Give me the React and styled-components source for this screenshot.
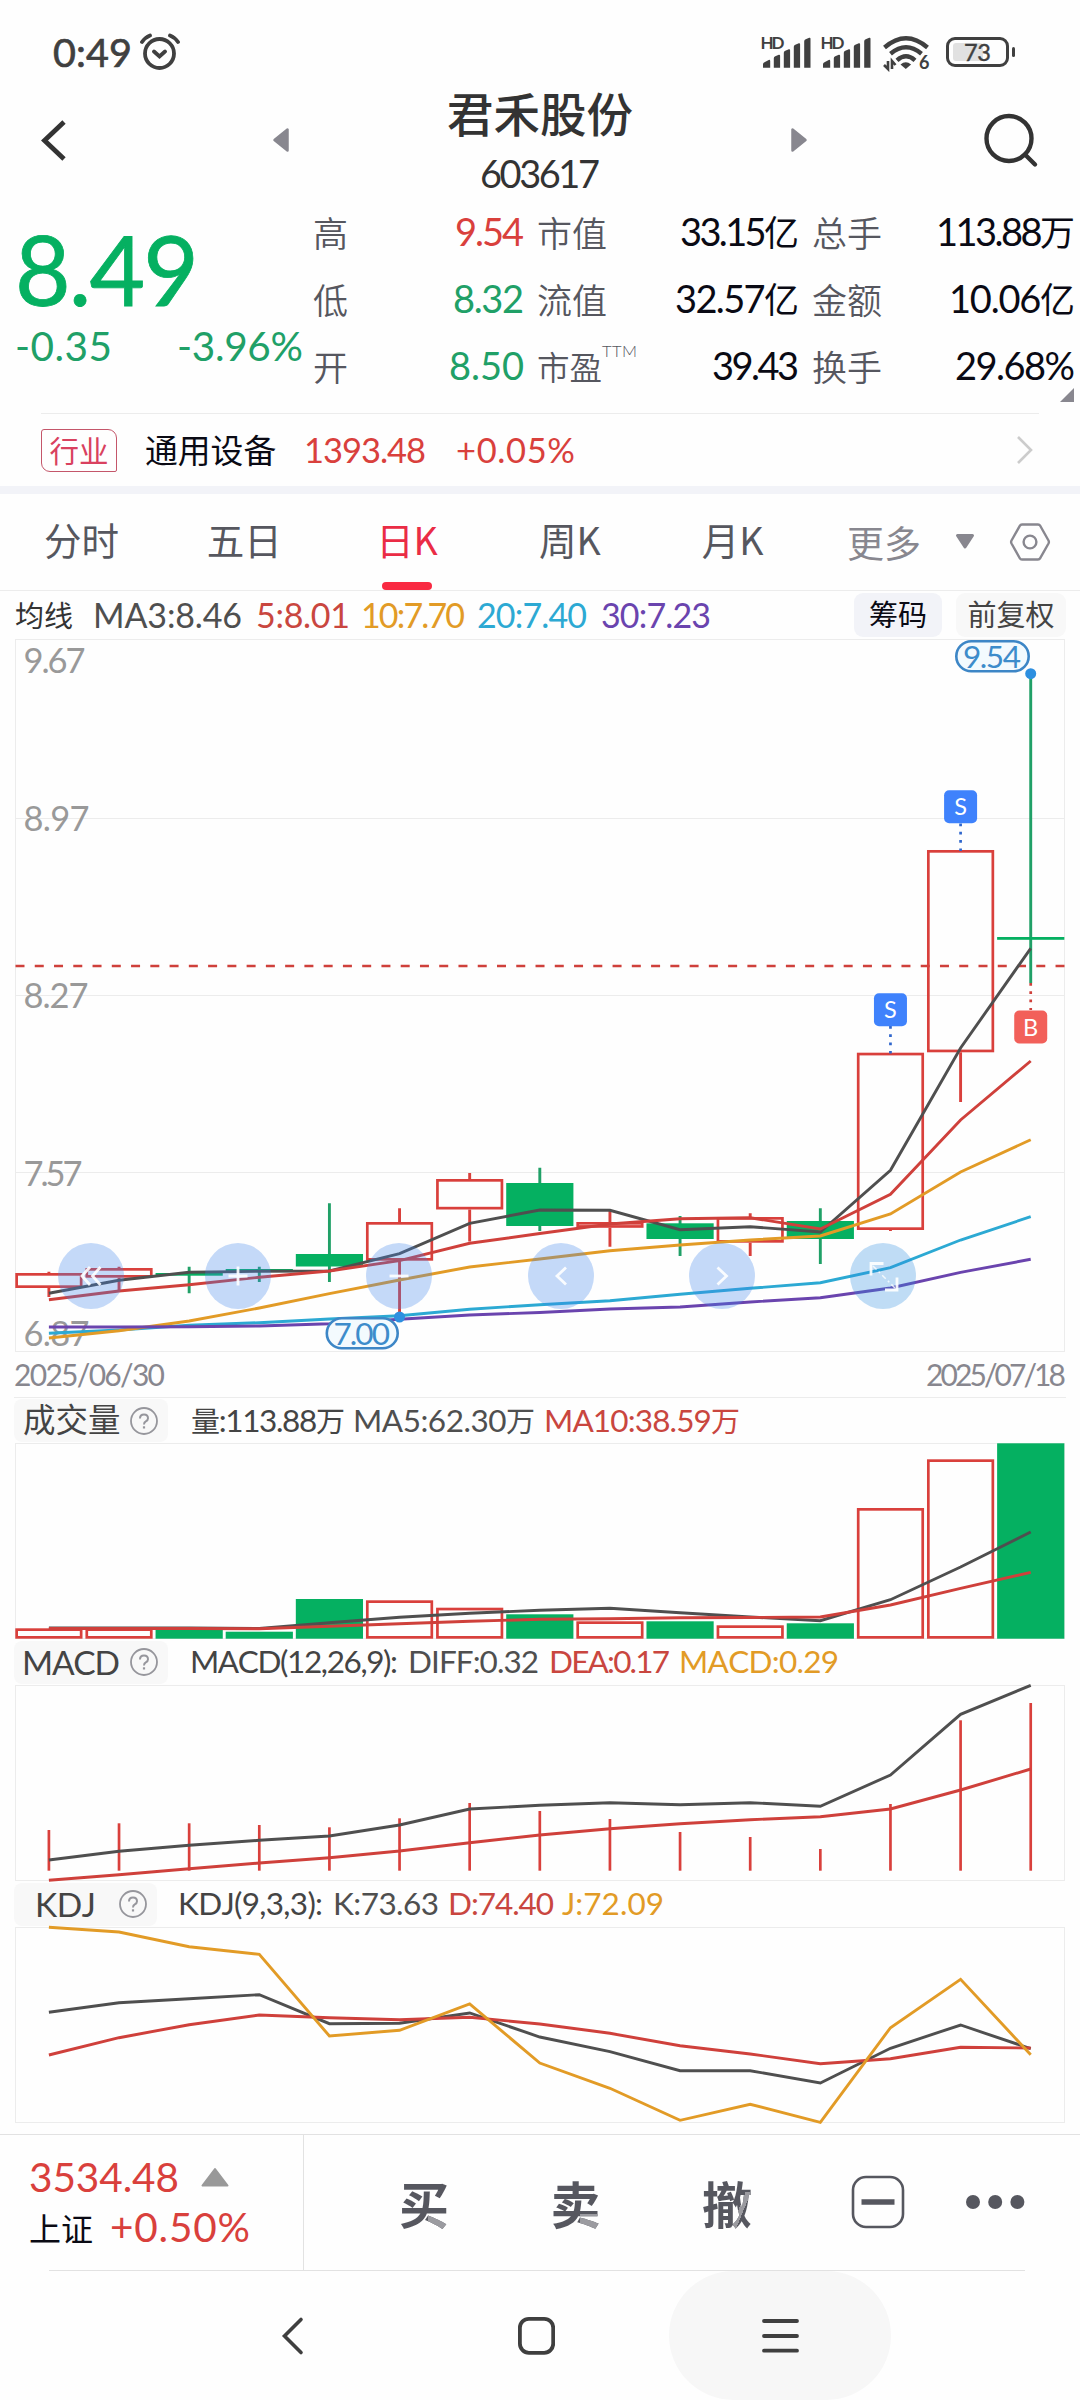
import { useLayoutEffect, useRef } from "react";
import styled, { createGlobalStyle } from "styled-components";

const RED = "#d9403c";
const GREEN = "#05b061";
const GREEN_LINE = "#20a067";
const DARK = "#4f4f4f";
const ORANGE = "#e29b26";
const CYAN = "#2ca9d3";
const PURPLE = "#6a44ae";
const BORDER = "#ececec";

const GlobalStyle = createGlobalStyle`
  * {
    box-sizing: border-box;
  }
  body {
    margin: 0;
    background: #fefefe;
    font-family: Lato, "Noto Sans CJK SC", sans-serif;
    color: #333;
  }
  svg {
    display: block;
  }
  svg text {
    font-kerning: none;
  }
`;

const Screen = styled.div`
  width: 1080px;
  height: 2400px;
  overflow: hidden;
  display: flex;
  flex-direction: column;
`;

/* ---------- text ---------- */

const FitBox = styled.span`
  display: block;
  flex: none;
  width: ${(p) => p.$w}px;
  margin-left: ${(p) => p.$ml || 0}px;
  font-size: ${(p) => p.$size}px;
  line-height: 1.2;
  color: ${(p) => p.$color || "inherit"};
  white-space: nowrap;
  font-kerning: none;
  -webkit-text-stroke: ${(p) => p.$stroke || 0}px currentColor;
`;

const Han = styled.span`
  font-size: 0.92em;
`;

// Tightens the letter spacing so that a figure fills its slot.
const Fit = ({ w, size, color, stroke, ml, children }) => {
  const ref = useRef(null);
  useLayoutEffect(() => {
    const el = ref.current;
    el.style.letterSpacing = "0px";
    const natural = el.getBoundingClientRect().width;
    el.style.letterSpacing = `${(w - natural) / (children.length - 1)}px`;
  }, [w, children]);
  return (
    <FitBox $w={w} $size={size} $color={color} $stroke={stroke} $ml={ml}>
      <span ref={ref}>
        {children
          .split(/([\u4e00-\u9fff]+)/)
          .map((part, i) => (i % 2 ? <Han key={i}>{part}</Han> : part))}
      </span>
    </FitBox>
  );
};

/* ---------- status bar ---------- */

const StatusBar = styled.div`
  height: 84px;
  padding: 20px 71px 0 53px;
  display: flex;
  align-items: center;
  flex: none;
  color: #404040;
`;

const AlarmIcon = styled.svg`
  width: 42px;
  height: 40px;
  margin-left: 6px;
`;

const StatusIcons = styled.div`
  margin-left: auto;
  display: flex;
  align-items: center;
`;

const Signal = styled.svg`
  width: 60px;
  height: 40px;
`;

const Battery = styled.div`
  position: relative;
  width: 63px;
  height: 30px;
  margin-left: 15px;
  border: 3px solid #404040;
  border-radius: 9px;
  padding: 3px 4px;
  &::after {
    content: "";
    position: absolute;
    right: -9px;
    top: 7px;
    width: 3px;
    height: 10px;
    border-radius: 2px;
    background: #404040;
  }
`;

const Charge = styled.div`
  width: 30px;
  height: 18px;
  border-radius: 3px;
  background: #e1e1e1;
  display: flex;
  align-items: center;
  padding-left: 11px;
`;

const SignalIcon = () => (
  <Signal viewBox="762 32 60 40">
    <text
      x="761.5"
      y="48.8"
      fontSize="17"
      fontWeight="700"
      textLength="24"
      fill="#404040"
    >
      HD
    </text>
    <g fill="#404040">
      <path d="M764 67.7v-3.5q0-1.5 1.5-2l4.2-2.2q1.5-.5 1.5 1v6.7z" />
      <path d="M774.8 67.7v-9.500q0-1.500 1.500-2l3.500-1.500q1.300-.3 1.300 1v12z" />
      <path d="M784.8 67.7v-15q0-1.500 1.500-2l3.500-1.500q1.300-.3 1.300 1v17.500z" />
      <path d="M794.8 67.7v-21q0-1.500 1.500-2l3.500-1.500q1.300-.3 1.300 1v23.500z" />
      <path d="M805.2 67.7v-26.500q0-1.500 1.500-2l3.500-1.500q1.300-.3 1.300 1v29z" />
    </g>
  </Signal>
);

const Status = () => (
  <StatusBar>
    <Fit w={79} size={39.5} stroke={0.7}>
      0:49
    </Fit>
    <AlarmIcon viewBox="138 32 42 40" fill="none" stroke="#404040">
      <circle cx="159.5" cy="53.5" r="14.5" strokeWidth="3.8" />
      <path
        d="M154 51.500l5.500 5 5.500-5M142 42q3-4.500 8-6.500M178 42q-3-4.500-8-6.500"
        strokeWidth="3.8"
        strokeLinecap="round"
      />
    </AlarmIcon>
    <StatusIcons>
      <SignalIcon />
      <SignalIcon />
      <svg
        width="50"
        height="40"
        viewBox="883 32 50 40"
        fill="none"
        stroke="#404040"
        strokeWidth="4.4"
      >
        <path d="M886.5 47.500q21.500-18.500 43 0" />
        <path d="M892.5 53.800q15.500-13 31 0" />
        <path d="M899 60.300q9-8 18 0" />
        <path
          d="M902.5 64.500q5.300-4.500 10.600 0l-5.300 4.500z"
          fill="#404040"
          stroke="none"
        />
        <path d="M890 61v8l-4-4M894 69v-8l3.500 4" strokeWidth="2.6" />
        <text
          x="921"
          y="69.3"
          fontSize="18"
          fontWeight="700"
          fill="#404040"
          stroke="none"
        >
          6
        </text>
      </svg>
      <Battery>
        <Charge>
          <Fit w={27} size={23.5} stroke={0.4}>
            73
          </Fit>
        </Charge>
      </Battery>
    </StatusIcons>
  </StatusBar>
);

/* ---------- header ---------- */

const HeaderBar = styled.header`
  height: 112px;
  flex: none;
  display: grid;
  grid-template-columns: 268px 544px 268px;
  align-items: center;
`;

const HeaderMiddle = styled.div`
  display: flex;
  justify-content: space-between;
  align-items: center;
  padding: 0 3px;
  height: 112px;
`;

const Title = styled.div`
  display: flex;
  flex-direction: column;
  align-items: center;
  gap: 10px;
  h1 {
    margin: 0;
    font-family: "Noto Sans CJK SC", sans-serif;
    font-size: 46.5px;
    font-weight: 500;
    line-height: 58px;
    color: #333;
  }
`;

const BackSlot = styled.div`
  padding-left: 38px;
`;

const SearchSlot = styled.div`
  padding: 0 40px 0 0;
  display: flex;
  justify-content: flex-end;
`;

const Header = () => (
  <HeaderBar>
    <BackSlot>
      <svg width="32" height="48" viewBox="38 116 32 48" fill="none">
        <path
          d="M64 122L44.500 140.500L64 159"
          stroke="#333"
          strokeWidth="4.8"
        />
      </svg>
    </BackSlot>
    <HeaderMiddle>
      <svg width="18" height="26" viewBox="0 0 18 26">
        <path
          d="M16.500 2.500v21L3.500 13z"
          fill="#88878f"
          stroke="#88878f"
          strokeWidth="2.5"
          strokeLinejoin="round"
        />
      </svg>
      <Title>
        <h1>君禾股份</h1>
        <Fit w={120} size={38}>
          603617
        </Fit>
      </Title>
      <svg width="18" height="26" viewBox="0 0 18 26">
        <path
          d="M1.500 2.500v21L14.500 13z"
          fill="#88878f"
          stroke="#88878f"
          strokeWidth="2.5"
          strokeLinejoin="round"
        />
      </svg>
    </HeaderMiddle>
    <SearchSlot>
      <svg
        width="60"
        height="60"
        viewBox="980 110 60 60"
        fill="none"
        stroke="#333"
        strokeWidth="4.4"
      >
        <circle cx="1009" cy="138.5" r="22.5" />
        <path d="M1025 154.500l10 10" strokeLinecap="round" />
      </svg>
    </SearchSlot>
  </HeaderBar>
);

/* ---------- quote ---------- */

const QuotePanel = styled.section`
  position: relative;
  height: 217px;
  flex: none;
  display: flex;
`;

const PriceBlock = styled.div`
  width: 313px;
  padding: 15px 0 0 15px;
`;

const Changes = styled.div`
  display: flex;
  margin-top: -4px;
`;

const StatGrid = styled.div`
  display: grid;
  grid-template-columns: 211px 262px 263px;
  grid-template-rows: repeat(3, 67.2px);
  column-gap: 13px;
  padding-top: 2px;
`;

const Stat = styled.div`
  display: flex;
  justify-content: space-between;
  align-items: center;
  color: #0a0a14;
`;

const StatLabel = styled.span`
  font-family: "Noto Sans CJK SC", sans-serif;
  font-size: ${(p) => (p.$small ? 32.5 : 35)}px;
  font-weight: 350;
  line-height: 44px;
  color: #56575f;
  display: flex;
  sup {
    font-family: Lato, sans-serif;
    font-size: 16.5px;
    line-height: 14px;
    letter-spacing: 0.4px;
  }
`;

const Corner = styled.svg`
  position: absolute;
  right: 6px;
  bottom: 11px;
`;

const stats = [
  { label: "高", value: "9.54", w: 69, color: RED },
  { label: "市值", value: "33.15亿", w: 119 },
  { label: "总手", value: "113.88万", w: 139 },
  { label: "低", value: "8.32", w: 71, color: GREEN_LINE },
  { label: "流值", value: "32.57亿", w: 124 },
  { label: "金额", value: "10.06亿", w: 126 },
  { label: "开", value: "8.50", w: 75, color: GREEN_LINE },
  { label: "市盈", value: "39.43", w: 87, sup: "TTM" },
  { label: "换手", value: "29.68%", w: 120 },
];

const Quote = () => (
  <QuotePanel>
    <PriceBlock>
      <Fit w={184} size={96} color={GREEN} stroke={0.8}>
        8.49
      </Fit>
      <Changes>
        <Fit w={97} size={40.5} color={GREEN_LINE}>
          -0.35
        </Fit>
        <Fit w={126} size={40.5} color={GREEN_LINE} ml={65}>
          -3.96%
        </Fit>
      </Changes>
    </PriceBlock>
    <StatGrid>
      {stats.map((s) => (
        <Stat key={s.label}>
          <StatLabel $small={s.sup}>
            {s.label}
            {s.sup && <sup>{s.sup}</sup>}
          </StatLabel>
          <Fit w={s.w} size={38} color={s.color}>
            {s.value}
          </Fit>
        </Stat>
      ))}
    </StatGrid>
    <Corner width="14" height="14" viewBox="0 0 14 14">
      <path d="M14 0v14H0z" fill="#88878f" />
    </Corner>
  </QuotePanel>
);

/* ---------- industry ---------- */

const IndustryRow = styled.div`
  height: 73px;
  margin: 0 41px;
  flex: none;
  display: flex;
  align-items: center;
  border-top: 1px solid ${BORDER};
`;

const Tag = styled.span`
  width: 76px;
  height: 43px;
  border: 1px solid #c4566a;
  border-radius: 3px 9px 2px 9px;
  font-family: "Noto Sans CJK SC", sans-serif;
  font-size: 29.5px;
  line-height: 38px;
  text-align: center;
  color: #d9415f;
`;

const IndustryName = styled.span`
  font-family: "Noto Sans CJK SC", sans-serif;
  font-size: 32.8px;
  line-height: 40px;
  margin: -3px 0 0 28px;
  width: 159px;
  color: #0a0a14;
`;

const RowArrow = styled.svg`
  margin-left: auto;
  margin-right: 5px;
`;

const Band = styled.div`
  height: 8px;
  flex: none;
  background: #f2f3f8;
`;

const Industry = () => (
  <IndustryRow>
    <Tag>行业</Tag>
    <IndustryName>通用设备</IndustryName>
    <Fit w={122} size={34.5} color={RED}>
      1393.48
    </Fit>
    <Fit w={119} size={34.5} color={RED} ml={30}>
      +0.05%
    </Fit>
    <RowArrow width="18" height="30" viewBox="0 0 18 30" fill="none">
      <path d="M2 2l13 13L2 28" stroke="#ccc" strokeWidth="2.6" />
    </RowArrow>
  </IndustryRow>
);

/* ---------- tabs ---------- */

const TabBar = styled.nav`
  height: 97px;
  flex: none;
  display: flex;
  align-items: center;
  border-bottom: 1px solid ${BORDER};
`;

const Tab = styled.div`
  position: relative;
  width: 162.8px;
  height: 96px;
  font-family: "Noto Sans CJK SC", sans-serif;
  font-size: 37.5px;
  line-height: 90px;
  text-align: center;
  color: ${(p) => (p.$active ? "#ea2c45" : "#56575f")};
  &::after {
    content: "";
    display: ${(p) => (p.$active ? "block" : "none")};
    position: absolute;
    left: 56px;
    bottom: 0;
    width: 50px;
    height: 8px;
    border-radius: 4px;
    background: #f92a42;
  }
`;

const More = styled.div`
  display: flex;
  align-items: center;
  gap: 34px;
  margin-left: 33px;
  height: 96px;
  font-family: "Noto Sans CJK SC", sans-serif;
  font-size: 37px;
  line-height: 88px;
  color: #88878f;
`;

const Tabs = () => (
  <TabBar>
    {["分时", "五日", "日K", "周K", "月K"].map((t) => (
      <Tab key={t} $active={t === "日K"}>
        {t}
      </Tab>
    ))}
    <More>
      更多
      <svg width="20" height="19" viewBox="0 0 20 19">
        <path
          d="M2.500 2.500h15L10 14z"
          fill="#88878f"
          stroke="#88878f"
          strokeWidth="3"
          strokeLinejoin="round"
        />
      </svg>
      <svg
        width="42"
        height="38"
        viewBox="0 0 42 38"
        fill="none"
        stroke="#88878f"
        strokeWidth="2.4"
      >
        <path
          d="M13 1.500h16q1.500 0 2.200 1.300l8.300 14.700q.8 1.500 0 3l-8.300 14.700q-.7 1.300-2.200 1.300H13q-1.500 0-2.200-1.300L2.500 20.500q-.8-1.500 0-3L10.800 2.800Q11.500 1.500 13 1.500z"
          strokeLinejoin="round"
        />
        <circle cx="21" cy="19" r="6.4" />
      </svg>
    </More>
  </TabBar>
);

/* ---------- legends ---------- */

const AverageRow = styled.div`
  height: 48px;
  flex: none;
  display: flex;
  align-items: center;
  padding: 0 14px 0 15px;
`;

const RowLabel = styled.span`
  width: 78px;
  margin-top: -3px;
  font-family: "Noto Sans CJK SC", sans-serif;
  font-size: 29px;
  line-height: 40px;
`;

const Chip = styled.span`
  width: ${(p) => p.$w}px;
  height: 44px;
  margin-left: ${(p) => (p.$push ? "auto" : "14px")};
  border-radius: 9px;
  background: ${(p) => p.$bg};
  font-family: "Noto Sans CJK SC", sans-serif;
  font-size: 29px;
  line-height: 40px;
  text-align: center;
  color: ${(p) => p.$color};
`;

const Averages = () => (
  <AverageRow>
    <RowLabel>均线</RowLabel>
    <Fit w={149} size={34} color={DARK}>
      MA3:8.46
    </Fit>
    <Fit w={94} size={34} color="#c9463f" ml={14}>
      5:8.01
    </Fit>
    <Fit w={104} size={34} color={ORANGE} ml={11}>
      10:7.70
    </Fit>
    <Fit w={110} size={34} color={CYAN} ml={12}>
      20:7.40
    </Fit>
    <Fit w={110} size={34} color={PURPLE} ml={14}>
      30:7.23
    </Fit>
    <Chip $w={88} $bg="#f2f3f8" $color="#0a0a14" $push>
      筹码
    </Chip>
    <Chip $w={110} $bg="#f8f8f8" $color="#444">
      前复权
    </Chip>
  </AverageRow>
);

const LegendRow = styled.div`
  height: ${(p) => p.$h}px;
  flex: none;
  display: flex;
  align-items: center;
  margin: 0 14px;
  border-top: ${(p) => (p.$line ? `1px solid ${BORDER}` : "none")};
`;

const Indicator = styled.div`
  width: ${(p) => p.$w}px;
  height: 43px;
  padding: 0 10px 0 ${(p) => p.$pl}px;
  margin-right: 23px;
  border-radius: 8px;
  background: #f8f8f8;
  display: flex;
  align-items: center;
  justify-content: space-between;
  color: #444;
`;

const IndicatorName = styled.span`
  font-family: "Noto Sans CJK SC", sans-serif;
  font-size: 32.5px;
  line-height: 38px;
  margin-top: -5px;
`;

const HelpIcon = () => (
  <svg width="28" height="28" viewBox="0 0 28 28" fill="none" stroke="#96969c">
    <circle cx="14" cy="14" r="13" strokeWidth="1.8" />
    <path
      d="M10 11.500q0-4 4-4t4 3.700q0 2-2.200 3.200-1.800 1-1.800 3"
      strokeWidth="2"
    />
    <path d="M14 19.300v2.200" strokeWidth="2.2" />
  </svg>
);

/* ---------- charts ---------- */

const px = (i) => 48.9 + i * 70.13;
const HALF = 33.6;

const candles = [
  { up: true, top: 1273, bottom: 1288, high: 1271.7, low: 1297 },
  { up: true, top: 1268, bottom: 1277.7, high: 1266.7, low: 1290 },
  { up: false, top: 1273, bottom: 1275.7, high: 1266.7, low: 1293.3 },
  { up: false, top: 1269, bottom: 1271.7, high: 1266.7, low: 1282 },
  { up: false, top: 1254, bottom: 1266.5, high: 1203.3, low: 1282 },
  { up: true, top: 1222, bottom: 1260.7, high: 1208.3, low: 1316 },
  { up: true, top: 1179, bottom: 1209.5, high: 1173, low: 1241.5 },
  { up: false, top: 1183, bottom: 1226, high: 1167.7, low: 1231 },
  { up: true, top: 1222, bottom: 1227.8, high: 1210, low: 1246.7 },
  { up: false, top: 1223.3, bottom: 1239, high: 1216, low: 1256 },
  { up: true, top: 1217, bottom: 1242.7, high: 1213.3, low: 1256 },
  { up: false, top: 1221, bottom: 1239, high: 1208.3, low: 1264 },
  { up: true, top: 1052.7, bottom: 1230, high: 1052.7, low: 1231 },
  { up: true, top: 850, bottom: 1052.3, high: 850, low: 1102 },
  { up: false, top: 937, bottom: 939.8, high: 673.7, low: 983 },
];

const averages = [
  {
    color: CYAN,
    ys: [1333.3, 1330, 1325.3, 1322.7, 1319, 1315.7, 1309.3, 1304.7, 1300.7, 1294.3, 1288.3, 1282.7, 1267.7, 1240, 1216.7],
  },
  {
    color: ORANGE,
    ys: [1338, 1330.7, 1321, 1308, 1293.7, 1280, 1267, 1259, 1250.7, 1245, 1240, 1236, 1214, 1172, 1139.7],
  },
  {
    color: PURPLE,
    ys: [1327, 1327, 1326.7, 1326, 1323.7, 1319.3, 1315, 1312.5, 1309, 1307, 1302, 1297.7, 1288, 1272.3, 1259.3],
  },
  {
    color: DARK,
    ys: [1293.3, 1280.3, 1272.3, 1271.3, 1271, 1253.7, 1223.3, 1210, 1210.3, 1229.7, 1226.7, 1232, 1170.3, 1048, 948.3],
  },
  {
    color: "#cf403b",
    ys: [1299.7, 1291, 1284.7, 1277.3, 1271, 1260.7, 1243.3, 1233.5, 1224, 1218.7, 1217.7, 1229, 1194.3, 1120, 1061],
  },
];

const volumeTops = [1628.3, 1628.3, 1630, 1631.7, 1599, 1600.3, 1607.7, 1614.3, 1621.3, 1621.3, 1625.3, 1623.3, 1508, 1459.3, 1443.3];
const volumeLines = [
  {
    color: DARK,
    ys: [1628, 1628, 1628, 1628.5, 1622.7, 1617.3, 1613.3, 1610.3, 1608.3, 1612.7, 1617, 1620.7, 1599.7, 1567, 1532],
  },
  {
    color: "#cf403b",
    ys: [1628.5, 1628.5, 1628.5, 1628.7, 1626.3, 1623.7, 1621.3, 1619.3, 1618.7, 1617.7, 1617.5, 1617, 1605, 1588.3, 1572.3],
  },
];

const macdTops = [1830, 1823.3, 1823.3, 1825, 1827.3, 1818.3, 1803, 1811, 1819, 1832, 1837, 1849, 1804, 1720.3, 1703];
const macdLines = [
  {
    color: DARK,
    ys: [1860, 1851.3, 1845.3, 1840.3, 1836, 1825, 1809, 1805.3, 1802.7, 1804.7, 1802.7, 1806.3, 1775, 1714.3, 1685.3],
  },
  {
    color: "#cf403b",
    ys: [1880.3, 1874.7, 1868.7, 1863, 1857.7, 1851, 1842.7, 1835, 1828.7, 1823.7, 1819.7, 1816.7, 1809, 1790, 1769],
  },
];

const kdjLines = [
  {
    color: DARK,
    ys: [2012.3, 2002.7, 1998.7, 1994.7, 2023.7, 2023.3, 2013, 2037, 2051.7, 2070.7, 2070.7, 2083, 2048.3, 2025, 2048.7],
  },
  {
    color: "#cf403b",
    ys: [2055, 2037.7, 2024.7, 2015, 2017.7, 2019.7, 2017.3, 2024, 2033.3, 2045.7, 2054, 2063.7, 2058.7, 2047.3, 2048],
  },
  {
    color: ORANGE,
    ys: [1927.3, 1932, 1946.7, 1954.3, 2036, 2030.3, 2004, 2063, 2088.3, 2120.3, 2104.3, 2122.3, 2027.7, 1979.3, 2054.7],
  },
];

const Plot = styled.svg`
  width: 1080px;
  height: ${(p) => p.$h}px;
  flex: none;
  overflow: visible;
`;

const Frame = ({ top, bottom, lines = [] }) => (
  <g fill="none" stroke={BORDER} strokeWidth="1">
    <rect x="15.5" y={top} width="1049" height={bottom - top} />
    {lines.map((y) => (
      <path key={y} d={`M16 ${y}H1064`} />
    ))}
  </g>
);

const Lines = ({ series }) =>
  series.map((s, k) => (
    <polyline
      key={k}
      points={s.ys.map((y, i) => `${px(i)},${y}`).join(" ")}
      fill="none"
      stroke={s.color}
      strokeWidth="2.9"
    />
  ));

const Bar = ({ i, up, top, bottom }) =>
  up ? (
    <rect
      x={px(i) - HALF + 1.35}
      y={top + 1.35}
      width={HALF * 2 - 2.7}
      height={bottom - top - 2.7}
      fill="none"
      stroke={RED}
      strokeWidth="2.7"
    />
  ) : (
    <rect
      x={px(i) - HALF}
      y={top}
      width={HALF * 2}
      height={bottom - top}
      fill={GREEN}
    />
  );

const Candle = ({ i, c }) => (
  <g>
    <path
      d={`M${px(i)} ${c.high}V${c.up ? c.top : c.low}M${px(i)} ${c.bottom}V${c.low}`}
      stroke={c.up ? RED : GREEN_LINE}
      strokeWidth="2.9"
    />
    <Bar i={i} up={c.up} top={c.top} bottom={c.bottom} />
  </g>
);

const Trade = ({ i, y, from, to, sell }) => (
  <g>
    <path
      d={`M${px(i)} ${from}V${to}`}
      stroke={sell ? "#2f66cc" : "#cf403b"}
      strokeWidth="2.7"
      strokeDasharray="2.7 5.6"
    />
    <rect
      x={px(i) - 16.5}
      y={y}
      width="33"
      height="33"
      rx="5"
      fill={sell ? "#3f82fc" : "#f2605a"}
    />
    <text x={px(i)} y={y + 25} fontSize="23.5" textAnchor="middle" fill="#fff">
      {sell ? "S" : "B"}
    </text>
  </g>
);

const PricePill = ({ x, y, w, dotX, dotY, children }) => (
  <g>
    <rect
      x={x + 1.3}
      y={y + 1.3}
      width={w - 2.6}
      height="30"
      rx="15"
      fill="#f3fafe"
      stroke="#3d86c6"
      strokeWidth="2.6"
    />
    <text
      x={x + 8}
      y={y + 27.5}
      fontSize="31.5"
      textLength={w - 17}
      fill="#3d8ccb"
    >
      {children}
    </text>
    <circle cx={dotX} cy={dotY} r="5.5" fill="#2d8fe0" />
  </g>
);

const ChartArea = styled.div`
  position: relative;
  height: 713px;
  flex: none;
`;

const RoundButton = styled.button`
  position: absolute;
  left: ${(p) => p.$x - 33}px;
  top: 604px;
  width: 66px;
  height: 66px;
  padding: 0;
  border: 0;
  border-radius: 50%;
  background: ${(p) => p.$bg || "rgba(62, 131, 235, 0.3)"};
`;

const controls = [
  { x: 91, d: "M32 24l-8 9 8 9M42.500 24l-8 9 8 9" },
  { x: 238, d: "M23.500 33h19M33 23.500v19" },
  { x: 399, d: "M23.500 33h19" },
  { x: 561, d: "M38 24.500l-9 8.500 9 8.500" },
  { x: 722, d: "M28.500 24.500l9 8.500-9 8.500" },
  {
    x: 883,
    d: "M21 32.500V20.500h12.500M35 47H47V34.500",
    dashed: "M23 23L45 45",
    bg: "rgba(45, 143, 224, 0.3)",
  },
];

const axis = [
  { label: "9.67", y: 672.7, w: 62 },
  { label: "8.97", y: 831.3, w: 66 },
  { label: "8.27", y: 1008.3, w: 65 },
  { label: "7.57", y: 1185.5, w: 59 },
  { label: "6.87", y: 1345.7, w: 66 },
];

const MainChart = () => (
  <ChartArea>
    <Plot $h={713} viewBox="0 639 1080 713">
      <Frame top={639.5} bottom={1351.5} lines={[818.5, 995.5, 1172.5]} />
      {axis.map((a) => (
        <text
          key={a.label}
          x="23.5"
          y={a.y}
          fontSize="34.5"
          textLength={a.w}
          fill="#999"
        >
          {a.label}
        </text>
      ))}
      <path
        d="M15.5 966H1064.5"
        stroke="#cf403b"
        strokeWidth="2.7"
        strokeDasharray="9 10.26"
      />
      {candles.map((c, i) => (
        <Candle key={i} i={i} c={c} />
      ))}
      <Lines series={averages} />
      <Trade i={12} y={993.3} from={1026} to={1054} sell />
      <Trade i={13} y={790.3} from={823.5} to={851} sell />
      <Trade i={14} y={1010.5} from={983} to={1010} />
      <PricePill x={955} y={640} w={75} dotX={1030.7} dotY={673.7}>
        9.54
      </PricePill>
      <PricePill x={325.5} y={1317} w={73.5} dotX={399.5} dotY={1317}>
        7.00
      </PricePill>
    </Plot>
    {controls.map((c) => (
      <RoundButton key={c.x} $x={c.x} $bg={c.bg}>
        <svg width="66" height="66" viewBox="0 0 66 66" fill="none">
          <path d={c.d} stroke="#fff" strokeOpacity=".9" strokeWidth="2.8" />
          {c.dashed && (
            <path
              d={c.dashed}
              stroke="#fff"
              strokeOpacity=".8"
              strokeWidth="1.5"
              strokeDasharray="5 3 2 3"
            />
          )}
        </svg>
      </RoundButton>
    ))}
  </ChartArea>
);

const Dates = styled.div`
  height: 45px;
  flex: none;
  display: flex;
  justify-content: space-between;
  align-items: center;
  padding: 0 14px 2px 14px;
  color: #88878f;
`;

/* ---------- bottom ---------- */

const Toolbar = styled.div`
  height: 137px;
  margin-top: 11px;
  flex: none;
  display: flex;
  border-top: 1px solid #e2e2e2;
`;

const IndexBox = styled.div`
  width: 304px;
  height: 136px;
  border-right: 1px solid #e2e2e2;
  padding: 17px 0 0 29px;
`;

const IndexLine = styled.div`
  display: flex;
  align-items: center;
  gap: 21px;
  height: 50px;
`;

const IndexName = styled.span`
  width: 60px;
  font-family: "Noto Sans CJK SC", sans-serif;
  font-size: 32px;
  line-height: 40px;
  white-space: nowrap;
  color: #0a0a14;
`;

const Actions = styled.div`
  flex: 1;
  display: flex;
  align-items: center;
  padding: 0 0 3px 95px;
`;

const Action = styled.span`
  width: 50px;
  margin-right: 101.5px;
  font-family: "Noto Sans CJK SC", sans-serif;
  font-size: 50px;
  font-weight: 700;
  line-height: 60px;
  color: transparent;
  background: ${(p) => p.$accent}, #56575f;
  background-clip: text;
  -webkit-background-clip: text;
`;

const cornerAccent =
  "linear-gradient(#9b9ba0, #9b9ba0) 29px 42px / 21px 18px no-repeat";
const strokeAccent =
  "linear-gradient(112deg, transparent 66%, #9b9ba0 66%, #9b9ba0 74%, transparent 74%) 0 20px / 50px 40px no-repeat";

const HoldIcon = styled.svg`
  margin-left: -4px;
`;

const DotsIcon = styled.svg`
  margin-left: 59px;
`;

const FooterLine = styled.div`
  height: 1px;
  flex: none;
  margin: -1px 55px 0 49px;
  background: #e2e2e2;
`;

const NavBar = styled.div`
  height: 130px;
  flex: none;
  display: grid;
  grid-template-columns: 222px 222px 222px;
  column-gap: 22px;
  padding-left: 181px;
`;

const NavItem = styled.div`
  height: 129px;
  border-radius: 65px;
  background: ${(p) => (p.$pressed ? "#f7f7f7" : "transparent")};
  display: flex;
  align-items: center;
  justify-content: center;
`;

const Bottom = () => (
  <>
    <Toolbar>
      <IndexBox>
        <IndexLine>
          <Fit w={150} size={40.5} color={RED}>
            3534.48
          </Fit>
          <svg width="30" height="20" viewBox="0 0 30 20">
            <path
              d="M2.500 18.500h25L15 2z"
              fill="#999"
              stroke="#999"
              strokeWidth="2"
              strokeLinejoin="round"
            />
          </svg>
        </IndexLine>
        <IndexLine>
          <IndexName>上证</IndexName>
          <Fit w={140} size={40.5} color={RED}>
            +0.50%
          </Fit>
        </IndexLine>
      </IndexBox>
      <Actions>
        <Action $accent={cornerAccent}>买</Action>
        <Action $accent={cornerAccent}>卖</Action>
        <Action $accent={strokeAccent}>撤</Action>
        <HoldIcon width="56" height="56" viewBox="0 0 56 56" fill="none">
          <rect
            x="3"
            y="3"
            width="50"
            height="50"
            rx="13"
            stroke="#56575f"
            strokeWidth="2.6"
          />
          <path d="M11.500 28h33" stroke="#56575f" strokeWidth="5.6" />
        </HoldIcon>
        <DotsIcon width="60" height="16" viewBox="0 0 60 16" fill="#56575f">
          <circle cx="8" cy="8" r="7" />
          <circle cx="30.2" cy="8" r="7" />
          <circle cx="52.4" cy="8" r="7" />
        </DotsIcon>
      </Actions>
    </Toolbar>
    <FooterLine />
    <NavBar>
      <NavItem>
        <svg width="26" height="40" viewBox="0 0 26 40" fill="none">
          <path
            d="M22 3.500L5.500 20L22 36.500"
            stroke="#3f3f3f"
            strokeWidth="3.6"
            strokeLinecap="round"
          />
        </svg>
      </NavItem>
      <NavItem>
        <svg width="37" height="40" viewBox="1 0 37 40" fill="none">
          <rect
            x="2.9"
            y="2.8"
            width="33.3"
            height="34"
            rx="9"
            stroke="#3f3f3f"
            strokeWidth="3.8"
          />
        </svg>
      </NavItem>
      <NavItem $pressed>
        <svg width="40" height="40" viewBox="0 0 40 40">
          <path
            d="M4 5h33M4 20h33M4 34.700h33"
            stroke="#3f3f3f"
            strokeWidth="3.8"
            strokeLinecap="round"
          />
        </svg>
      </NavItem>
    </NavBar>
  </>
);

const App = () => {
  return (
    <Screen>
      <GlobalStyle />
      <Status />
      <Header />
      <Quote />
      <Industry />
      <Band />
      <Tabs />
      <Averages />
      <MainChart />
      <Dates>
        <Fit w={151} size={30}>
          2025/06/30
        </Fit>
        <Fit w={140} size={30}>
          2025/07/18
        </Fit>
      </Dates>

      <LegendRow $h={46} $line>
        <Indicator $w={154} $pl={9}>
          <IndicatorName>成交量</IndicatorName>
          <HelpIcon />
        </Indicator>
        <Fit w={154} size={31.5} color="#444">
          量:113.88万
        </Fit>
        <Fit w={182} size={31.5} color={DARK} ml={8}>
          MA5:62.30万
        </Fit>
        <Fit w={196} size={31.5} color="#c9463f" ml={9}>
          MA10:38.59万
        </Fit>
      </LegendRow>
      <Plot $h={196} viewBox="0 1443 1080 196">
        <Frame top={1443.5} bottom={1638.5} />
        {volumeTops.map((top, i) => (
          <Bar key={i} i={i} up={candles[i].up} top={top} bottom={1638.7} />
        ))}
        <Lines series={volumeLines} />
      </Plot>

      <LegendRow $h={46}>
        <Indicator $w={154} $pl={8}>
          <Fit w={98} size={33.5}>
            MACD
          </Fit>
          <HelpIcon />
        </Indicator>
        <Fit w={208} size={31.5} color="#444" ml={-1}>
          MACD(12,26,9):
        </Fit>
        <Fit w={131} size={31.5} color={DARK} ml={10}>
          DIFF:0.32
        </Fit>
        <Fit w={121} size={31.5} color="#c9463f" ml={10}>
          DEA:0.17
        </Fit>
        <Fit w={160} size={31.5} color={ORANGE} ml={9}>
          MACD:0.29
        </Fit>
      </LegendRow>
      <Plot $h={196} viewBox="0 1685 1080 196">
        <Frame top={1685.5} bottom={1880.5} />
        {macdTops.map((top, i) => (
          <path
            key={i}
            d={`M${px(i)} ${top}V1870.7`}
            stroke={RED}
            strokeWidth="2.7"
          />
        ))}
        <Lines series={macdLines} />
      </Plot>

      <LegendRow $h={46}>
        <Indicator $w={143} $pl={21}>
          <Fit w={61} size={33.5}>
            KDJ
          </Fit>
          <HelpIcon />
        </Indicator>
        <Fit w={145} size={31.5} color="#444" ml={-2}>
          KDJ(9,3,3):
        </Fit>
        <Fit w={106} size={31.5} color={DARK} ml={10}>
          K:73.63
        </Fit>
        <Fit w={106} size={31.5} color="#c9463f" ml={9}>
          D:74.40
        </Fit>
        <Fit w={102} size={31.5} color={ORANGE} ml={8}>
          J:72.09
        </Fit>
      </LegendRow>
      <Plot $h={196} viewBox="0 1927 1080 196">
        <Frame top={1927.5} bottom={2122.5} />
        <Lines series={kdjLines} />
      </Plot>
      <Bottom />
    </Screen>
  );
};

export default App;
